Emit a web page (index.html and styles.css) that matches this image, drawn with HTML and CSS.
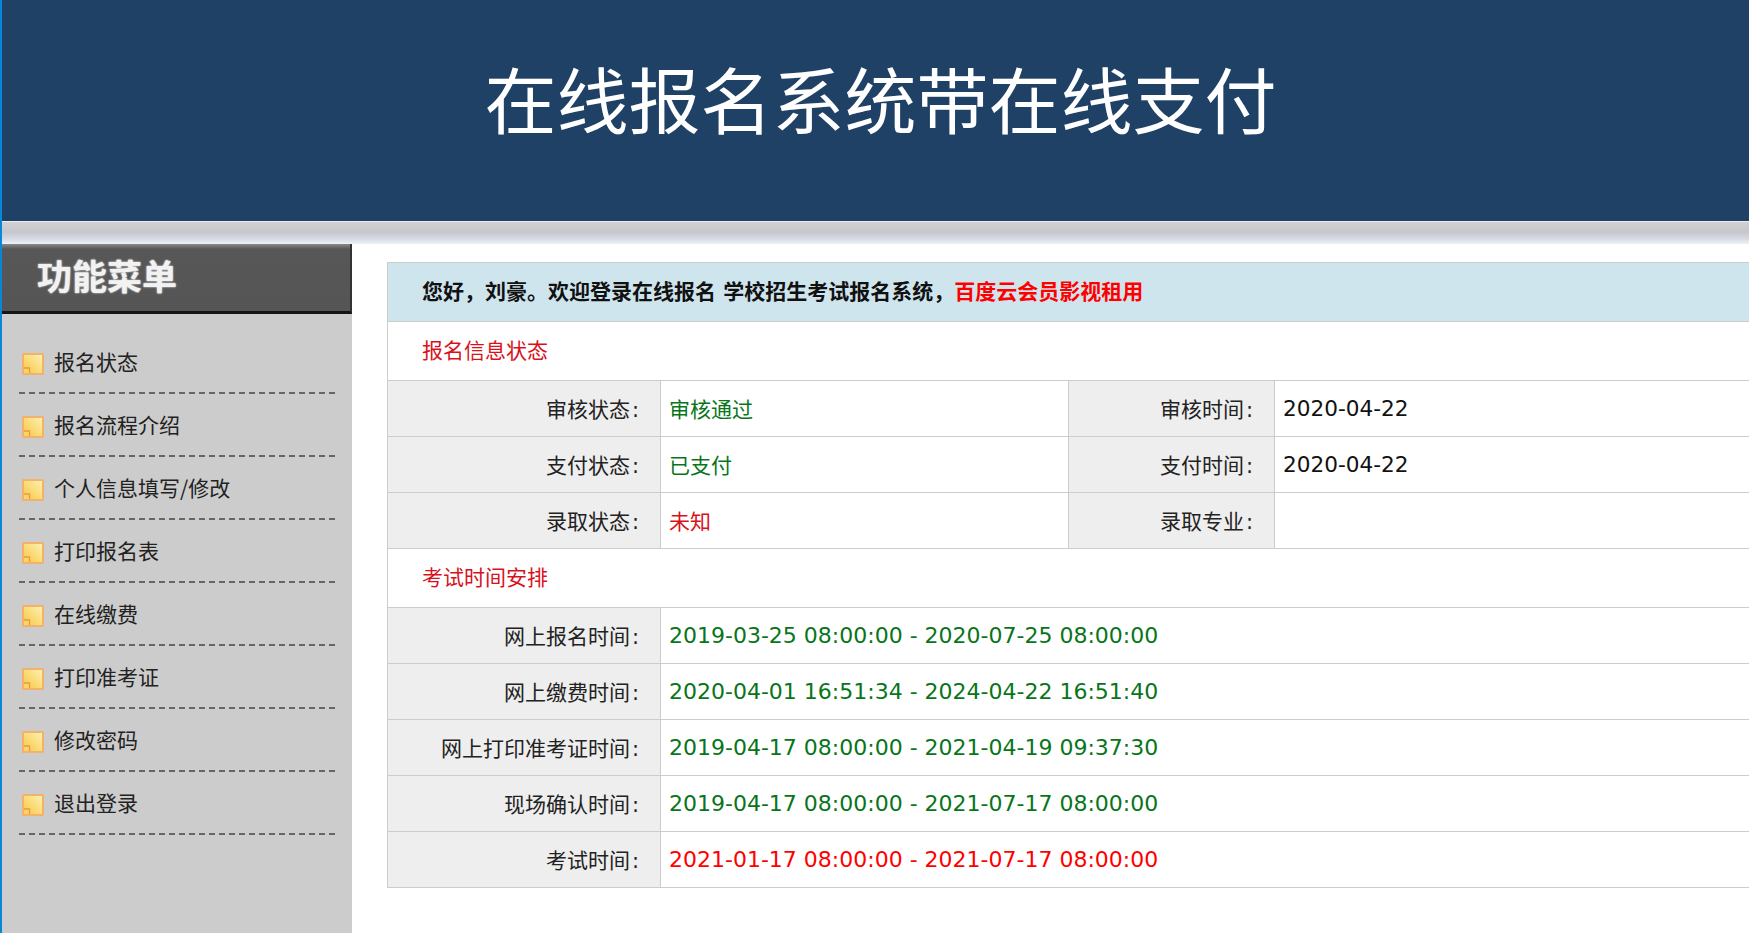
FILE: index.html
```html
<!DOCTYPE html>
<html lang="zh-CN">
<head>
<meta charset="utf-8">
<title>在线报名系统带在线支付</title>
<link rel="stylesheet" href="styles.css">
</head>
<body>
<svg class="defs" width="0" height="0" aria-hidden="true">
  <defs>
    <linearGradient id="note" x1="1" y1="0" x2="0" y2="1">
      <stop offset="0" stop-color="#fdf0b0"/>
      <stop offset="1" stop-color="#f7c844"/>
    </linearGradient>
    <symbol id="icon-note" viewBox="0 0 22 22">
      <rect x="0" y="0" width="22" height="22" rx="1.5" fill="#f3b26c"/>
      <rect x="2" y="2" width="18" height="18" fill="url(#note)"/>
      <path d="M2 15h5v5H2z" fill="#f9d566"/>
      <path d="M2 15h5.500v5" fill="none" stroke="#e99a45" stroke-width="1.300"/>
    </symbol>
  </defs>
</svg>
<header class="banner"><h1>在线报名系统带在线支付</h1></header>
<div class="strip"></div>
<div class="layout">
  <aside class="sidebar">
    <h2 class="side-title">功能菜单</h2>
    <ul class="menu">
      <li><svg class="ico"><use href="#icon-note"/></svg><a href="#">报名状态</a></li>
      <li><svg class="ico"><use href="#icon-note"/></svg><a href="#">报名流程介绍</a></li>
      <li><svg class="ico"><use href="#icon-note"/></svg><a href="#">个人信息填写/修改</a></li>
      <li><svg class="ico"><use href="#icon-note"/></svg><a href="#">打印报名表</a></li>
      <li><svg class="ico"><use href="#icon-note"/></svg><a href="#">在线缴费</a></li>
      <li><svg class="ico"><use href="#icon-note"/></svg><a href="#">打印准考证</a></li>
      <li><svg class="ico"><use href="#icon-note"/></svg><a href="#">修改密码</a></li>
      <li><svg class="ico"><use href="#icon-note"/></svg><a href="#">退出登录</a></li>
    </ul>
  </aside>
  <main class="content">
    <table class="info">
      <colgroup><col class="c1"><col class="c2"><col class="c3"><col class="c4"></colgroup>
      <tr class="welcome"><td colspan="4">您好，刘豪。欢迎登录在线报名 学校招生考试报名系统，<span class="red">百度云会员影视租用</span></td></tr>
      <tr class="section"><td colspan="4">报名信息状态</td></tr>
      <tr><th>审核状态<span class="colon">:</span></th><td class="green">审核通过</td><th>审核时间<span class="colon">:</span></th><td><span class="day">2020-04-22</span></td></tr>
      <tr><th>支付状态<span class="colon">:</span></th><td class="green">已支付</td><th>支付时间<span class="colon">:</span></th><td><span class="day">2020-04-22</span></td></tr>
      <tr><th>录取状态<span class="colon">:</span></th><td class="crimson">未知</td><th>录取专业<span class="colon">:</span></th><td></td></tr>
      <tr class="section"><td colspan="4">考试时间安排</td></tr>
      <tr><th>网上报名时间<span class="colon">:</span></th><td colspan="3" class="green"><span class="num">2019-03-25 08:00:00 - 2020-07-25 08:00:00</span></td></tr>
      <tr><th>网上缴费时间<span class="colon">:</span></th><td colspan="3" class="green"><span class="num">2020-04-01 16:51:34 - 2024-04-22 16:51:40</span></td></tr>
      <tr><th>网上打印准考证时间<span class="colon">:</span></th><td colspan="3" class="green"><span class="num">2019-04-17 08:00:00 - 2021-04-19 09:37:30</span></td></tr>
      <tr><th>现场确认时间<span class="colon">:</span></th><td colspan="3" class="green"><span class="num">2019-04-17 08:00:00 - 2021-07-17 08:00:00</span></td></tr>
      <tr><th>考试时间<span class="colon">:</span></th><td colspan="3" class="red"><span class="num">2021-01-17 08:00:00 - 2021-07-17 08:00:00</span></td></tr>
    </table>
  </main>
</div>
</body>
</html>
```
FILE: styles.css
```css
html, body { margin: 0; padding: 0; overflow: hidden; }
html { height: 933px; }
body {
  display: flex;
  flex-direction: column;
  height: 933px;
  border-left: 2px solid #0a86d8;
  box-sizing: border-box;
  background: #fff;
  color: #111;
  font-family: "DejaVu Sans", "Noto Sans CJK SC", sans-serif;
  font-size: 21px;
}
.defs { position: absolute; }
.banner {
  flex: none;
  height: 221px;
  background: #1f4166;
  display: flex;
  align-items: center;
  justify-content: center;
  padding-left: 10px;
  box-sizing: border-box;
}
.banner h1 {
  margin: 0 0 28px;
  color: #fff;
  font: 400 72px/1 "Noto Sans CJK SC", sans-serif;
}
.strip {
  flex: none;
  height: 23px;
  border-top: 1px solid #e8edf2;
  box-sizing: border-box;
  background: linear-gradient(#d2d0d5 0, #c6c6cb 45%, #d3d9e4 75%, #eef2f7 100%);
}
.layout { flex: 1; display: flex; min-height: 0; }
.sidebar { flex: none; width: 350px; background: #ccc; }
.side-title {
  margin: 0;
  height: 70px;
  box-sizing: border-box;
  padding: 0 0 0 35px;
  background: linear-gradient(#8a8a8a 0, #575757 5px, #555 100%);
  border-bottom: 3px solid #151515;
  border-right: 2px solid #333;
  color: #f2f2f2;
  font: 700 35px/62px "Noto Sans CJK SC", sans-serif;
  text-shadow: 0 0 2px #fff;
}
.menu { list-style: none; margin: 17px 17px 0; padding: 0; }
.menu li {
  height: 63px;
  box-sizing: border-box;
  display: flex;
  align-items: center;
  gap: 10px;
  padding: 0 0 0 3px;
  border-bottom: 2px dashed #666;
}
.ico { width: 22px; height: 22px; flex: none; margin-top: 5px; }
.menu a {
  color: #222;
  text-decoration: none;
  font-family: "Noto Sans CJK SC", sans-serif;
  margin-bottom: 2px;
}
.content { flex: 1; min-width: 0; overflow: hidden; padding: 18px 0 0 35px; }
.info {
  width: 1490px;
  table-layout: fixed;
  border-collapse: collapse;
}
.c1 { width: 273px; }
.c2 { width: 408px; }
.c3 { width: 206px; }
.info th, .info td {
  border: 1px solid #ccc;
  height: 56px;
  padding: 0 8px 2px;
  box-sizing: border-box;
  font-weight: 400;
}
.info th { background: #eee; text-align: right; padding-right: 21px; color: #222; }
.colon { padding: 0 0 0 2px; }
.welcome td {
  height: 59px;
  background: #cfe5ee;
  padding-left: 34px;
  padding-bottom: 4px;
  font-weight: 700;
  color: #111;
}
.section td { height: 59px; padding-left: 34px; padding-bottom: 4px; color: #d8121c; }
.green { color: #08751a; }
.red { color: #f00; }
.crimson { color: #d8121c; }
.welcome .red { color: #f00; }
.num { display: inline-block; padding-top: 2px; font-size: 22px; }
.day { display: inline-block; padding-top: 2px; font-size: 21.6px; }
```
